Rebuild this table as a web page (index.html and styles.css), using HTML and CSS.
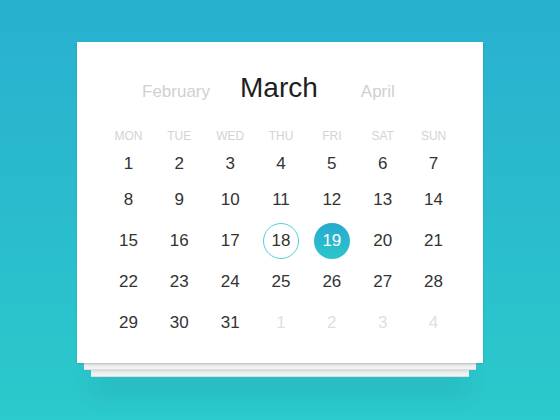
FILE: index.html
```html
<!DOCTYPE html>
<html>
<head>
<meta charset="utf-8">
<link rel="stylesheet" href="styles.css">
</head>
<body>
<div class="stack">
  <div class="card">
    <div class="months">
      <span class="month side">February</span>
      <span class="month current">March</span>
      <span class="month side next">April</span>
    </div>
    <div class="weekdays">
      <span>MON</span><span>TUE</span><span>WED</span><span>THU</span><span>FRI</span><span>SAT</span><span>SUN</span>
    </div>
    <div class="days">
      <span>1</span><span>2</span><span>3</span><span>4</span><span>5</span><span>6</span><span>7</span>
      <span>8</span><span>9</span><span>10</span><span>11</span><span>12</span><span>13</span><span>14</span>
      <span>15</span><span>16</span><span>17</span><span><i class="today">18</i></span><span><i class="selected">19</i></span><span>20</span><span>21</span>
      <span>22</span><span>23</span><span>24</span><span>25</span><span>26</span><span>27</span><span>28</span>
      <span>29</span><span>30</span><span>31</span><span class="muted">1</span><span class="muted">2</span><span class="muted">3</span><span class="muted">4</span>
    </div>
  </div>
  <div class="sheet sheet-2"></div>
  <div class="sheet sheet-3"></div>
</div>
</body>
</html>
```
FILE: styles.css
```css
html, body {
  margin: 0;
  padding: 0;
}
body {
  width: 560px;
  height: 420px;
  overflow: hidden;
  background: linear-gradient(180deg, #28b0cf 0%, #2abdcd 55%, #2bcacb 100%);
  font-family: "Liberation Sans", Arial, sans-serif;
  padding-top: 42px;
  box-sizing: border-box;
}
.stack {
  width: 406px;
  margin-left: 77px;
  display: flex;
  flex-direction: column;
  align-items: center;
}
.card {
  position: relative;
  z-index: 3;
  width: 406px;
  box-sizing: border-box;
  background: #fff;
  padding: 32px 24px 20px 26px;
  box-shadow: 0 1px 2px rgba(0, 0, 0, 0.12);
}
.months {
  display: flex;
  align-items: baseline;
  height: 28px;
  padding-left: 39px;
}
.month {
  line-height: 1;
}
.side {
  font-size: 17px;
  color: #d0d0d0;
}
.current {
  font-size: 28px;
  color: #1e1e1e;
  margin-left: 30px;
}
.next {
  margin-left: 43px;
}
.weekdays {
  margin-top: 22px;
  display: grid;
  grid-template-columns: repeat(7, 1fr);
  height: 24px;
  line-height: 24px;
  font-size: 12px;
  color: #d3d3d3;
  text-align: center;
}
.days {
  display: grid;
  grid-template-columns: repeat(7, 1fr);
  grid-template-rows: 31px repeat(4, 41px);
  font-size: 17px;
  color: #333;
  text-align: center;
}
.days span {
  display: flex;
  align-items: center;
  justify-content: center;
}
.days .muted {
  color: #e0e0e0;
}
.today, .selected {
  font-style: normal;
  width: 36px;
  height: 36px;
  border-radius: 50%;
  box-sizing: border-box;
  display: flex;
  align-items: center;
  justify-content: center;
}
.today {
  border: 1px solid #4fd0d8;
}
.selected {
  background: linear-gradient(180deg, #27a9cf 0%, #2bc6cb 100%);
  color: #fff;
}
.sheet {
  height: 7px;
  background: linear-gradient(180deg, #d3d9da 0%, #eceeee 45%, #f3f4f4 100%);
  border-bottom: 1px solid #d9dfe0;
  box-sizing: border-box;
}
.sheet-2 {
  width: 392px;
  position: relative;
  z-index: 2;
}
.sheet-3 {
  width: 378px;
  position: relative;
  z-index: 1;
  box-shadow: 0 12px 24px rgba(0, 70, 80, 0.3);
}
```
